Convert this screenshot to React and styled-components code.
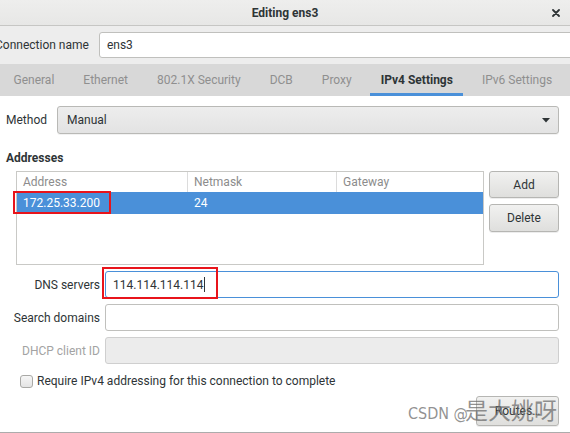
import React from 'react';
import styled, { createGlobalStyle } from 'styled-components';

const Global = createGlobalStyle`
  html, body { margin: 0; padding: 0; background: #ffffff; }
  body {
    font-family: Roboto, "Liberation Sans", sans-serif;
    font-size: 12px;
    color: #2e3436;
  }
  * { box-sizing: border-box; }
`;

const Window = styled.div`
  position: relative;
  width: 570px;
  height: 433px;
  overflow: hidden;
  display: flex;
  flex-direction: column;
  background: #ffffff;
`;

const TitleBar = styled.div`
  flex: none;
  height: 26px;
  display: grid;
  grid-template-columns: 1fr auto 1fr;
  align-items: center;
  background: linear-gradient(#eeeeed, #e7e7e6);
  border-bottom: 1px solid #c6c6c4;
`;

const Title = styled.div`
  grid-column: 2;
  font-weight: 700;
  font-size: 12px;
  color: #2e3436;
`;

const CloseButton = styled.div`
  grid-column: 3;
  justify-self: end;
  margin-right: 10px;
  display: flex;
  align-items: center;
`;

const NameRow = styled.div`
  flex: none;
  height: 38px;
  display: flex;
  align-items: center;
  gap: 10px;
  background: #ededed;
`;

const NameLabel = styled.div`
  margin-left: -5px;
  white-space: nowrap;
`;

const TextInput = styled.div`
  position: relative;
  flex: 1;
  height: ${(p) => p.$h || 27}px;
  display: flex;
  align-items: center;
  padding: 0 7px;
  background: ${(p) => (p.$disabled ? '#ececec' : '#ffffff')};
  border: 1px solid ${(p) => (p.$focus ? '#4a90d9' : p.$disabled ? '#cfcfcf' : '#c0c0bd')};
  border-radius: 3px;
  margin-right: ${(p) => p.$mr || 0}px;
  color: #2e3436;
`;

const Caret = styled.span`
  display: inline-block;
  width: 1px;
  height: 15px;
  background: #2e3436;
  margin-left: 1px;
`;

const TabBar = styled.div`
  flex: none;
  height: 32px;
  display: flex;
  align-items: stretch;
  padding-left: 0;
  margin-left: -1px;
  background: #d8d8d8;
`;

const Tab = styled.div`
  display: flex;
  align-items: center;
  margin: 0 4px;
  padding: 3px 10.5px 0;
  border-bottom: 3px solid ${(p) => (p.$active ? '#4a90d9' : 'transparent')};
  color: ${(p) => (p.$active ? '#2e3436' : '#8f8f8f')};
  font-weight: ${(p) => (p.$active ? 700 : 400)};
  white-space: nowrap;
`;

const Content = styled.div`
  flex: 1;
  display: flex;
  flex-direction: column;
  padding: 10px 11px 0 6px;
  background: #ffffff;
  border-bottom: 1px solid #acacac;
`;

const MethodRow = styled.div`
  display: flex;
  align-items: center;
  gap: 10px;
`;

const Combo = styled.div`
  flex: 1;
  height: 28px;
  display: flex;
  align-items: center;
  justify-content: space-between;
  padding: 0 8px 0 9px;
  border: 1px solid #b9b9b6;
  border-radius: 3px;
  background: linear-gradient(#ededed, #e3e3e3);
  box-shadow: 0 1px 0 rgba(0, 0, 0, 0.05);
`;

const SectionHeading = styled.div`
  margin-top: 17px;
  font-weight: 700;
  line-height: 15px;
`;

const AddressArea = styled.div`
  display: flex;
  gap: 5px;
  margin: 5px 0 0 10px;
`;

const Table = styled.div`
  width: 468px;
  height: 94px;
  border: 1px solid #c9c9c6;
  background: #ffffff;
`;

const TableRow = styled.div`
  display: grid;
  grid-template-columns: 171px 149px 1fr;
  height: ${(p) => (p.$header ? 20 : 22)}px;
  background: ${(p) => (p.$selected ? '#4a90d9' : 'transparent')};
  color: ${(p) => (p.$header ? '#8c8c8c' : p.$selected ? '#ffffff' : '#2e3436')};
`;

const Cell = styled.div`
  position: relative;
  display: flex;
  align-items: center;
  padding-left: 6px;
  border-right: 1px solid ${(p) => (p.$sep ? '#dcdcdc' : 'transparent')};
  white-space: nowrap;
`;

const Highlight = styled.div`
  position: absolute;
  left: ${(p) => p.$l}px;
  top: ${(p) => p.$t}px;
  width: ${(p) => p.$w}px;
  height: ${(p) => p.$h}px;
  border: 2px solid #e8141b;
  pointer-events: none;
`;

const ButtonColumn = styled.div`
  width: 70px;
  display: flex;
  flex-direction: column;
  gap: 6px;
`;

const Button = styled.div`
  width: ${(p) => p.$w || 70}px;
  height: ${(p) => p.$h || 28}px;
  display: flex;
  align-items: center;
  justify-content: center;
  border: 1px solid #b6b6b3;
  border-radius: 3px;
  background: linear-gradient(#f1f1f0, #dfdfdd);
  box-shadow: 0 1px 0 rgba(0, 0, 0, 0.07);
  color: #2e3436;
`;

const FormGrid = styled.div`
  display: grid;
  grid-template-columns: 94px 1fr;
  column-gap: 5px;
  row-gap: 6px;
  margin-top: 6px;
  align-items: center;
`;

const FieldLabel = styled.div`
  text-align: right;
  white-space: nowrap;
  color: ${(p) => (p.$disabled ? '#a3a3a3' : '#2e3436')};
`;

const CheckRow = styled.div`
  display: flex;
  align-items: center;
  gap: 4px;
  margin: 10px 0 0 14px;
`;

const CheckBox = styled.div`
  width: 13px;
  height: 13px;
  border: 1px solid #a9a9a6;
  border-radius: 3px;
  background: linear-gradient(#f6f6f6, #e4e4e4);
`;

const Footer = styled.div`
  display: flex;
  justify-content: flex-end;
  margin-top: 8px;
`;

const Watermark = styled.div`
  position: absolute;
  left: 408px;
  top: 397px;
  display: flex;
  align-items: baseline;
  line-height: 24px;
  color: rgba(110, 110, 110, 0.75);
  pointer-events: none;
  white-space: nowrap;
`;

const WatermarkLatin = styled.span`
  font-family: "DejaVu Sans Condensed", "DejaVu Sans", sans-serif;
  font-size: 16px;
`;

const WatermarkCJK = styled.span`
  font-family: "Noto Sans CJK SC", sans-serif;
  font-size: 23px;
  margin-left: -3px;
`;

const tabs = ['General', 'Ethernet', '802.1X Security', 'DCB', 'Proxy', 'IPv4 Settings', 'IPv6 Settings'];

export default function App() {
  return (
    <>
      <Global />
      <Window>
        <TitleBar>
          <Title>Editing ens3</Title>
          <CloseButton>
            <svg width="8" height="8" viewBox="0 0 8 8">
              <path d="M1 1 L7 7 M7 1 L1 7" stroke="#2e3436" strokeWidth="1.8" strokeLinecap="round" />
            </svg>
          </CloseButton>
        </TitleBar>

        <NameRow>
          <NameLabel>Connection name</NameLabel>
          <TextInput $h={26} $mr={-4}>ens3</TextInput>
        </NameRow>

        <TabBar>
          {tabs.map((t) => (
            <Tab key={t} $active={t === 'IPv4 Settings'}>{t}</Tab>
          ))}
        </TabBar>

        <Content>
          <MethodRow>
            <span>Method</span>
            <Combo>
              <span>Manual</span>
              <svg width="8" height="5" viewBox="0 0 8 5">
                <path d="M0 0 L8 0 L4 4.5 Z" fill="#2e3436" />
              </svg>
            </Combo>
          </MethodRow>

          <SectionHeading>Addresses</SectionHeading>

          <AddressArea>
            <Table>
              <TableRow $header>
                <Cell $sep>Address</Cell>
                <Cell $sep>Netmask</Cell>
                <Cell>Gateway</Cell>
              </TableRow>
              <TableRow $selected>
                <Cell>
                  172.25.33.200
                  <Highlight $l={-4} $t={-1} $w={98} $h={23} />
                </Cell>
                <Cell>24</Cell>
                <Cell />
              </TableRow>
            </Table>
            <ButtonColumn>
              <Button $h={27}>Add</Button>
              <Button $h={28}>Delete</Button>
            </ButtonColumn>
          </AddressArea>

          <FormGrid>
            <FieldLabel>DNS servers</FieldLabel>
            <TextInput $focus>
              114.114.114.114<Caret />
              <Highlight $l={-4} $t={-5} $w={116} $h={32} />
            </TextInput>
            <FieldLabel>Search domains</FieldLabel>
            <TextInput />
            <FieldLabel $disabled>DHCP client ID</FieldLabel>
            <TextInput $disabled />
          </FormGrid>

          <CheckRow>
            <CheckBox />
            <span>Require IPv4 addressing for this connection to complete</span>
          </CheckRow>

          <Footer>
            <Button $w={83} $h={30}>Routes…</Button>
          </Footer>
        </Content>

        <Watermark>
          <WatermarkLatin>CSDN @</WatermarkLatin>
          <WatermarkCJK>是大姚呀</WatermarkCJK>
        </Watermark>
      </Window>
    </>
  );
}
